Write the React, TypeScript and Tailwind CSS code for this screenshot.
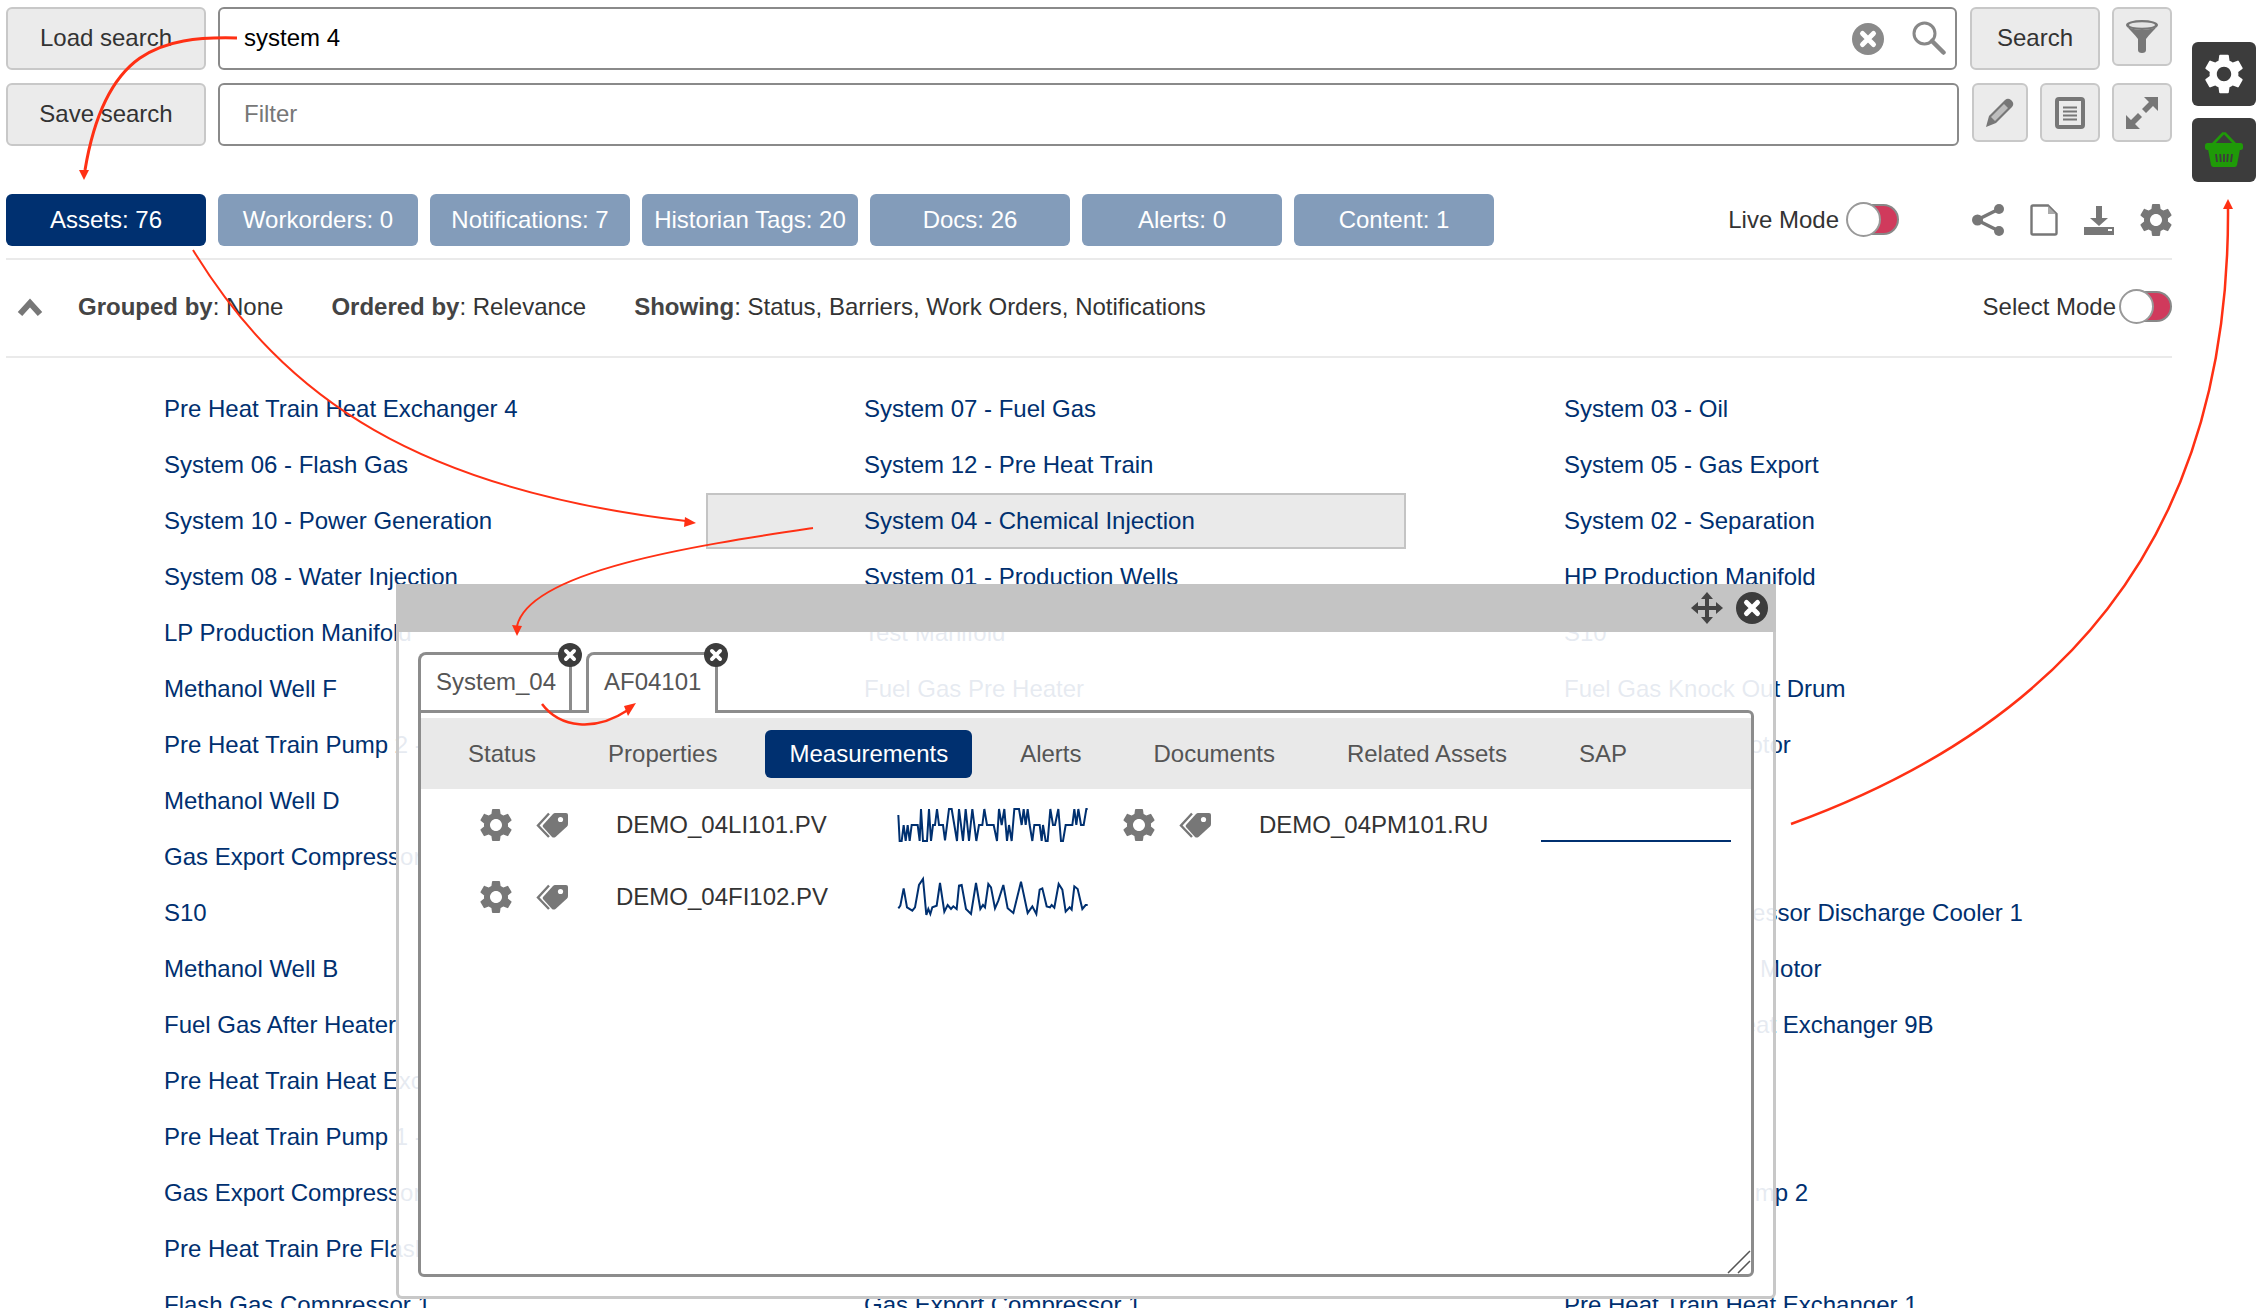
import React from "react";
import { MdSettings } from "react-icons/md";

const col1 = ["Pre Heat Train Heat Exchanger 4","System 06 - Flash Gas","System 10 - Power Generation","System 08 - Water Injection","LP Production Manifold","Methanol Well F","Pre Heat Train Pump 2 - A","Methanol Well D","Gas Export Compressor 2","S10","Methanol Well B","Fuel Gas After Heater","Pre Heat Train Heat Exchanger 2","Pre Heat Train Pump 1 - A","Gas Export Compressor 3","Pre Heat Train Pre Flash Drum","Flash Gas Compressor 1"];
const col2 = ["System 07 - Fuel Gas","System 12 - Pre Heat Train","System 04 - Chemical Injection","System 01 - Production Wells","Test Manifold","Fuel Gas Pre Heater","Methanol Well A","Methanol Well C","Flash Gas Cooler","Methanol Well E","Test Separator","Gas Export Cooler","Pre Heat Train Heat Exchanger 3","Production Separator","Methanol Tank","Water Injection Pump 1","Gas Export Compressor 1"];
const col3 = ["System 03 - Oil","System 05 - Gas Export","System 02 - Separation","HP Production Manifold","S10","Fuel Gas Knock Out Drum","Injection Pump Motor","Flare","Drain","Flash Gas Compressor Discharge Cooler 1","Main Compressor Motor","Pre Heat Train Heat Exchanger 9B","Cooler","Separator","Pre Heat Train Pump 2","Vent","Pre Heat Train Heat Exchanger 1"];

const s1 = "10,48 14,126 20,126 26,78 32,126 38,78 44,126 50,78 68,78 74,126 78,30 84,126 96,126 102,30 108,126 114,78 120,78 126,30 132,78 144,78 150,124 156,78 162,30 170,30 178,78 186,126 192,30 204,126 212,30 222,126 232,30 244,126 252,78 262,78 268,30 276,78 296,78 306,126 312,30 320,78 328,30 336,126 342,78 350,126 358,30 372,30 380,78 386,30 392,78 398,30 404,78 412,126 418,78 434,78 440,126 444,78 452,126 458,126 466,30 474,78 480,78 490,30 498,126 504,126 512,78 532,78 538,30 544,78 550,30 558,78 566,78 574,30 578,30";
const s2 = "10,328 16,320 26,268 36,325 52,335 60,325 72,258 84,240 94,348 100,330 106,345 112,325 125,320 135,252 148,338 158,318 168,330 175,322 185,330 192,260 200,258 213,330 228,345 243,252 256,330 264,318 270,325 280,255 288,265 300,328 310,305 325,258 338,328 355,342 378,248 398,342 412,322 424,345 434,272 442,268 455,322 465,325 470,318 478,326 491,255 502,272 512,338 524,325 530,332 538,262 548,270 562,330 572,318 578,318";

const btn = "flex items-center justify-center bg-[#ebebeb] border-2 border-[#c8c8c8] rounded-[6px] text-[#333]";
const inputCls = "h-[63px] border-[2.5px] border-[#8a8a8a] rounded-[6px] pl-[24px] pb-[2px] text-[24px] outline-none placeholder:text-[#777]";
const tabCls = "flex items-center justify-center h-[52px] pb-[1px] rounded-[6px]";

function CloseCircle({ size, fill }: { size: number; fill: string }) {
  return (
    <svg width={size} height={size} viewBox="0 0 32 32" className="block shrink-0">
      <circle cx="16" cy="16" r="16" fill={fill} />
      <path d="M10.5 10.5 L21.5 21.5 M21.5 10.5 L10.5 21.5" stroke="#fff" strokeWidth="5" strokeLinecap="round" />
    </svg>
  );
}

function Tag() {
  return (
    <svg width="33" height="27" viewBox="0 0 33 27" className="block shrink-0">
      <path d="M13 1.5 L2 13.5 L13 25" fill="none" stroke="#777" strokeWidth="2.4" />
      <path d="M7 13 L17 2 Q18 1 19 1 H30 Q32 1 32 3 V12 Q32 13.5 31 14.5 L19.5 25 Q17.5 26 16 25 L7 15 Q6.3 14 7 13 Z" fill="#777" />
      <circle cx="24.5" cy="7.5" r="2.6" fill="#fff" />
    </svg>
  );
}

function Toggle() {
  return (
    <div className="relative w-[53px] h-[36px] shrink-0">
      <div className="absolute right-0 top-[2px] w-[40px] h-[31px] rounded-r-full bg-[#d03a5c] border-2 border-[#888]" />
      <div className="absolute left-0 top-0 w-[35px] h-[35px] rounded-full bg-white border-2 border-[#999]" />
    </div>
  );
}

function Measure({ name, spark, view }: { name: string; spark?: string; view?: string }) {
  return (
    <div className="flex items-center h-[72px] pl-[59px]">
      <MdSettings className="text-[#777] w-[40px] h-[40px] -mx-[4px] shrink-0" />
      <div className="ml-[24px]"><Tag /></div>
      <div className="ml-[47px] w-[279px] text-[#333] shrink-0">{name}</div>
      {spark ? (
        <svg width="200" height="50" viewBox={view} className="block shrink-0">
          <polyline points={spark} fill="none" stroke="#003070" strokeWidth="6" />
        </svg>
      ) : (
        <svg width="200" height="50" viewBox="0 0 200 50" className="block shrink-0">
          <line x1="3" y1="41" x2="193" y2="41" stroke="#003070" strokeWidth="2" />
        </svg>
      )}
    </div>
  );
}

export default function App() {
  return (
    <div className="relative w-[2268px] h-[1308px] overflow-hidden bg-white flex font-['Liberation_Sans',Arial,sans-serif] text-[24px] text-[#333]">
      <div className="w-[2172px] shrink-0 pl-[6px] pt-[7px]">
        {/* search row */}
        <div className="flex items-start h-[63px]">
          <button className={`${btn} w-[200px] h-[63px] pb-[2px] text-[24px]`}>Load search</button>
          <div className="relative ml-[12px]">
            <input readOnly value="system 4" className={`${inputCls} w-[1739px] text-black`} />
            <div className="absolute right-[73px] top-[16px]"><CloseCircle size={32} fill="#8a8a8a" /></div>
            <svg width="34" height="34" viewBox="0 0 34 34" className="absolute right-[11px] top-[14px]">
              <circle cx="12.5" cy="12.5" r="10.5" fill="none" stroke="#888" strokeWidth="3" />
              <path d="M20 20 L31.5 31.5" stroke="#888" strokeWidth="4.5" strokeLinecap="round" />
            </svg>
          </div>
          <button className={`${btn} ml-[13px] w-[130px] h-[63px] pb-[2px] text-[24px]`}>Search</button>
          <button className={`${btn} ml-[12px] w-[60px] h-[59px]`}>
            <svg width="32" height="33" viewBox="0 0 32 33">
              <ellipse cx="16" cy="5" rx="16" ry="5" fill="#777" />
              <ellipse cx="16" cy="5" rx="13" ry="2.8" fill="#e4e4e4" />
              <path d="M0.5 6 C4 10 9 15 12 19 V30 a4 3 0 0 0 8 0 V19 C23 15 28 10 31.5 6 C26 11 6 11 0.5 6 Z" fill="#777" />
            </svg>
          </button>
        </div>
        {/* filter row */}
        <div className="flex items-start h-[63px] mt-[13px]">
          <button className={`${btn} w-[200px] h-[63px] pb-[2px] text-[24px]`}>Save search</button>
          <input readOnly placeholder="Filter" className={`${inputCls} ml-[12px] w-[1741px]`} />
          <button className={`${btn} ml-[13px] w-[56px] h-[59px]`}>
            <svg width="28" height="29" viewBox="0 0 28 29">
              <path d="M0 29 L3 18 L19 2 Q22 -0.5 25 2 L26 3 Q28.5 6 26 9 L10 25 Z" fill="#777" />
              <path d="M5 19 L18 6 L22 10 L9 23 Z" fill="#bdbdbd" />
            </svg>
          </button>
          <button className={`${btn} ml-[12px] w-[60px] h-[59px]`}>
            <svg width="30" height="32" viewBox="0 0 30 32">
              <rect x="2" y="2" width="26" height="28" rx="2" fill="#ebebeb" stroke="#777" strokeWidth="4" />
              <path d="M8 10.5 H22 M8 14.5 H22 M8 18.5 H22 M8 22.5 H22" stroke="#777" strokeWidth="1.8" />
            </svg>
          </button>
          <button className={`${btn} ml-[12px] w-[60px] h-[59px]`}>
            <svg width="32" height="32" viewBox="0 0 32 32">
              <polygon points="18,0 32,0 32,14 27,9 20,16 16,12 23,5" fill="#777" />
              <polygon points="14,32 0,32 0,18 5,23 12,16 16,20 9,27" fill="#777" />
            </svg>
          </button>
        </div>
        {/* result tabs */}
        <div className="flex items-center mt-[48px] h-[52px]">
          <div className="flex gap-[12px] text-white text-[24px]">
            <div className={`${tabCls} w-[200px] bg-[#003070]`}>Assets: 76</div>
            <div className={`${tabCls} w-[200px] bg-[#839cba]`}>Workorders: 0</div>
            <div className={`${tabCls} w-[200px] bg-[#839cba]`}>Notifications: 7</div>
            <div className={`${tabCls} w-[216px] bg-[#839cba]`}>Historian Tags: 20</div>
            <div className={`${tabCls} w-[200px] bg-[#839cba]`}>Docs: 26</div>
            <div className={`${tabCls} w-[200px] bg-[#839cba]`}>Alerts: 0</div>
            <div className={`${tabCls} w-[200px] bg-[#839cba]`}>Content: 1</div>
          </div>
          <div className="ml-auto flex items-center">
            <span>Live Mode</span>
            <div className="ml-[7px]"><Toggle /></div>
            <svg width="32" height="32" viewBox="0 0 32 32" className="ml-[73px]">
              <path d="M27 5 L5 16 L27 27" fill="none" stroke="#777" strokeWidth="3.5" />
              <circle cx="27" cy="5" r="5" fill="#777" /><circle cx="5.5" cy="16" r="5.5" fill="#777" /><circle cx="27" cy="27" r="5" fill="#777" />
            </svg>
            <svg width="28" height="32" viewBox="0 0 28 32" className="ml-[26px]">
              <path d="M3 1.5 H18 L26.5 10 V29 Q26.5 30.5 25 30.5 H3 Q1.5 30.5 1.5 29 V3 Q1.5 1.5 3 1.5 Z" fill="#fff" stroke="#777" strokeWidth="2.4" />
              <path d="M18 2 V10 H26 Z" fill="#aaa" />
            </svg>
            <svg width="30" height="29" viewBox="0 0 30 29" className="ml-[26px]">
              <polygon points="12,0 18,0 18,12 24,12 15,20 6,12 12,12" fill="#777" />
              <rect x="0" y="21" width="30" height="8" fill="#777" />
              <rect x="24" y="23" width="4" height="2" fill="#fff" />
            </svg>
            <MdSettings className="text-[#777] w-[40px] h-[40px] ml-[22px] -mr-[4px]" />
          </div>
        </div>
        <div className="h-[2px] bg-[#eaeaea] mt-[12px]" />
        {/* info row */}
        <div className="flex items-center h-[98px] pb-[2px] border-b-2 border-[#eaeaea]">
          <svg width="26" height="18" viewBox="0 0 26 18" className="ml-[11px]">
            <path d="M3 16 L13 5 L23 16" fill="none" stroke="#777" strokeWidth="6" />
          </svg>
          <div className="ml-[35px] whitespace-nowrap"><b className="text-[#444]">Grouped by</b>: None</div>
          <div className="ml-[48px] whitespace-nowrap"><b className="text-[#444]">Ordered by</b>: Relevance</div>
          <div className="ml-[48px] whitespace-nowrap"><b className="text-[#444]">Showing</b>: Status, Barriers, Work Orders, Notifications</div>
          <div className="ml-auto flex items-center">
            <span>Select Mode</span>
            <div className="ml-[3px]"><Toggle /></div>
          </div>
        </div>
        {/* list */}
        <div className="grid grid-flow-col grid-rows-[repeat(17,56px)] grid-cols-[repeat(3,700px)] mt-[23px] text-[#003070] whitespace-nowrap">
          {col1.map((t) => <div key={"a" + t} className="flex items-center pl-[158px]">{t}</div>)}
          {col2.map((t, i) => (
            <div key={"b" + t} className={i === 2 ? "flex items-center pl-[156px] bg-[#eaeaea] border-2 border-[#c4c4c4]" : "flex items-center pl-[158px]"}>{t}</div>
          ))}
          {col3.map((t) => <div key={"c" + t} className="flex items-center pl-[158px]">{t}</div>)}
        </div>
      </div>

      {/* side buttons */}
      <div className="ml-[20px] pt-[42px] flex flex-col gap-[12px]">
        <div className="flex items-center justify-center w-[64px] h-[64px] rounded-[6px] bg-[#3c3c3c]">
          <MdSettings className="text-white w-[48px] h-[48px]" />
        </div>
        <div className="flex items-center justify-center w-[64px] h-[64px] rounded-[6px] bg-[#3c3c3c]">
          <svg width="38" height="36" viewBox="0 0 38 36">
            <path d="M8 12 L18 1.5 M20 1.5 L30 12" fill="none" stroke="#1f9a08" strokeWidth="2.6" strokeLinecap="round" />
            <rect x="0" y="11" width="38" height="7" rx="2.5" fill="#1f9a08" />
            <path d="M3 17 H35 L32 33 Q31.6 35 29.5 35 H8.5 Q6.4 35 6 33 Z" fill="#1f9a08" />
            <path d="M11 22 L12 30 M15.2 22 L15.8 30 M19 22 V30 M22.8 22 L22.2 30 M27 22 L26 30" stroke="#3c3c3c" strokeWidth="1.8" />
          </svg>
        </div>
      </div>

      {/* floating window */}
      <div className="absolute left-[396px] top-[584px] w-[1380px] h-[715px] flex flex-col">
        <div className="h-[48px] bg-[#c4c4c4] flex items-center justify-end pr-[8px] gap-[13px] shrink-0">
          <svg width="32" height="32" viewBox="0 0 32 32">
            <g fill="#444">
              <polygon points="16,0 22,7 10,7" /><polygon points="16,32 22,25 10,25" />
              <polygon points="0,16 7,10 7,22" /><polygon points="32,16 25,10 25,22" />
              <rect x="14" y="6" width="4" height="20" /><rect x="6" y="14" width="20" height="4" />
            </g>
          </svg>
          <CloseCircle size={32} fill="#3c3c3c" />
        </div>
        <div className="flex-1 bg-white/90 border-x-[3px] border-b-[3px] border-[#c8c8c8] rounded-b-[6px] pl-[19px] pt-[20px]">
          <div className="flex items-start gap-[14px] h-[58px] text-[#555]">
            <div className="relative w-[154px] h-[58px] border-[3px] border-b-0 border-[#8c8c8c] rounded-t-[8px] bg-white flex items-center pl-[15px] pb-[2px]">
              System_04
              <div className="absolute -right-[13px] -top-[12px]"><CloseCircle size={24} fill="#3c3c3c" /></div>
            </div>
            <div className="relative z-10 w-[132px] h-[61px] border-[3px] border-b-0 border-[#8c8c8c] rounded-t-[8px] bg-white flex items-center pl-[15px] pb-[5px]">
              AF04101
              <div className="absolute -right-[13px] -top-[12px]"><CloseCircle size={24} fill="#3c3c3c" /></div>
            </div>
          </div>
          <div className="relative w-[1336px] h-[567px] border-[3px] border-[#8c8c8c] rounded-[6px] rounded-tl-none bg-white pt-[5px]">
            <div className="h-[71px] bg-[#e9e9e9] flex items-center gap-[24px] pl-[23px] text-[#555]">
              <div className="px-[24px] h-[48px] flex items-center">Status</div>
              <div className="px-[24px] h-[48px] flex items-center">Properties</div>
              <div className="px-[24px] h-[48px] flex items-center rounded-[6px] bg-[#003070] text-white">Measurements</div>
              <div className="px-[24px] h-[48px] flex items-center">Alerts</div>
              <div className="px-[24px] h-[48px] flex items-center">Documents</div>
              <div className="px-[24px] h-[48px] flex items-center">Related Assets</div>
              <div className="px-[24px] h-[48px] flex items-center">SAP</div>
            </div>
            <div className="grid grid-cols-[643px_643px]">
              <Measure name="DEMO_04LI101.PV" spark={s1} view="0 3 600 150" />
              <Measure name="DEMO_04PM101.RU" />
              <Measure name="DEMO_04FI102.PV" spark={s2} view="0 219 600 150" />
            </div>
            <svg width="24" height="24" viewBox="0 0 24 24" className="absolute right-0 bottom-0">
              <path d="M1 23 L23 1 M11 23 L23 11" stroke="#555" strokeWidth="1.5" />
            </svg>
          </div>
        </div>
      </div>

      {/* red annotation arrows */}
      <svg width="2268" height="1308" viewBox="0 0 2268 1308" className="absolute left-0 top-0 z-20 pointer-events-none">
        <g fill="none" stroke="#ff3014" strokeWidth="2">
          <path d="M237 38 C160 36 105 50 85 170" strokeWidth="3" />
          <path d="M193 250 C285 400 420 490 686 521" />
          <path d="M813 528 C700 545 530 570 517 626" />
          <path d="M542 704 C560 728 595 732 628 710" strokeWidth="2.5" />
          <path d="M1791 824 C2050 730 2230 550 2228 208" strokeWidth="2.5" />
        </g>
        <g fill="#ff3014">
          <polygon points="84,180 79,170 89,170" />
          <polygon points="696,523 685,517 684,527" />
          <polygon points="517,636 512,625 522,626" />
          <polygon points="636,703 624,706 628,716" />
          <polygon points="2228,199 2223,209 2233,209" />
        </g>
      </svg>
    </div>
  );
}
